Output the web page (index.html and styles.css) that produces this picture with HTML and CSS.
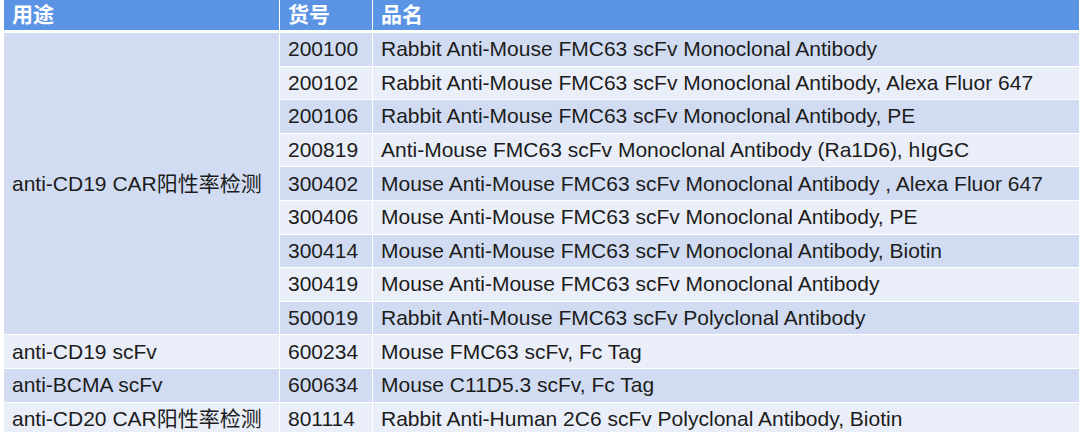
FILE: index.html
```html
<!DOCTYPE html>
<html lang="zh">
<head>
<meta charset="utf-8">
<link rel="stylesheet" href="styles.css">
</head>
<body>
<table class="products">
  <colgroup>
    <col class="c-use">
    <col class="c-no">
    <col class="c-name">
  </colgroup>
  <thead>
    <tr><th>用途</th><th>货号</th><th>品名</th></tr>
  </thead>
  <tbody>
    <tr class="dark"><td rowspan="9" class="merged">anti-CD19 CAR阳性率检测</td><td>200100</td><td>Rabbit Anti-Mouse FMC63 scFv Monoclonal Antibody</td></tr>
    <tr class="light"><td>200102</td><td>Rabbit Anti-Mouse FMC63 scFv Monoclonal Antibody, Alexa Fluor 647</td></tr>
    <tr class="dark"><td>200106</td><td>Rabbit Anti-Mouse FMC63 scFv Monoclonal Antibody, PE</td></tr>
    <tr class="light"><td>200819</td><td>Anti-Mouse FMC63 scFv Monoclonal Antibody (Ra1D6), hIgGC</td></tr>
    <tr class="dark"><td>300402</td><td>Mouse Anti-Mouse FMC63 scFv Monoclonal Antibody , Alexa Fluor 647</td></tr>
    <tr class="light"><td>300406</td><td>Mouse Anti-Mouse FMC63 scFv Monoclonal Antibody, PE</td></tr>
    <tr class="dark"><td>300414</td><td>Mouse Anti-Mouse FMC63 scFv Monoclonal Antibody, Biotin</td></tr>
    <tr class="light"><td>300419</td><td>Mouse Anti-Mouse FMC63 scFv Monoclonal Antibody</td></tr>
    <tr class="dark"><td>500019</td><td>Rabbit Anti-Mouse FMC63 scFv Polyclonal Antibody</td></tr>
    <tr class="light"><td>anti-CD19 scFv</td><td>600234</td><td>Mouse FMC63 scFv, Fc Tag</td></tr>
    <tr class="dark"><td>anti-BCMA scFv</td><td>600634</td><td>Mouse C11D5.3 scFv, Fc Tag</td></tr>
    <tr class="light"><td>anti-CD20 CAR阳性率检测</td><td>801114</td><td>Rabbit Anti-Human 2C6 scFv Polyclonal Antibody, Biotin</td></tr>
  </tbody>
</table>
</body>
</html>
```
FILE: styles.css
```css
html, body {
  margin: 0;
  padding: 0;
  background: #ffffff;
  overflow: hidden;
  height: 432px;
}
.products {
  margin-left: 4px;
  width: 1076px;
  table-layout: fixed;
  border-collapse: separate;
  border-spacing: 0;
  font-family: "Liberation Sans", Arial, "Noto Sans CJK SC", sans-serif;
  font-size: 21px;
  color: #1c1c1c;
}
.c-use { width: 276px; }
.c-no { width: 93px; }
.c-name { width: 707px; }
.products th {
  background: #5b94e4;
  color: #ffffff;
  font-weight: bold;
  text-align: left;
  height: 30px;
  padding: 0 8px;
  border-bottom: 3px solid #ffffff;
  border-right: 1px solid #ffffff;
  vertical-align: middle;
  line-height: 30px;
}
.products td {
  height: 32.6px;
  padding: 0 8px;
  border-bottom: 1px solid #ffffff;
  border-right: 1px solid #ffffff;
  vertical-align: middle;
  white-space: nowrap;
  line-height: 22px;
}
.products tr.dark td { background: #d1dcf2; }
.products tr.light td { background: #e9eef8; }
.products td.merged { background: #d1dcf2; }
```
